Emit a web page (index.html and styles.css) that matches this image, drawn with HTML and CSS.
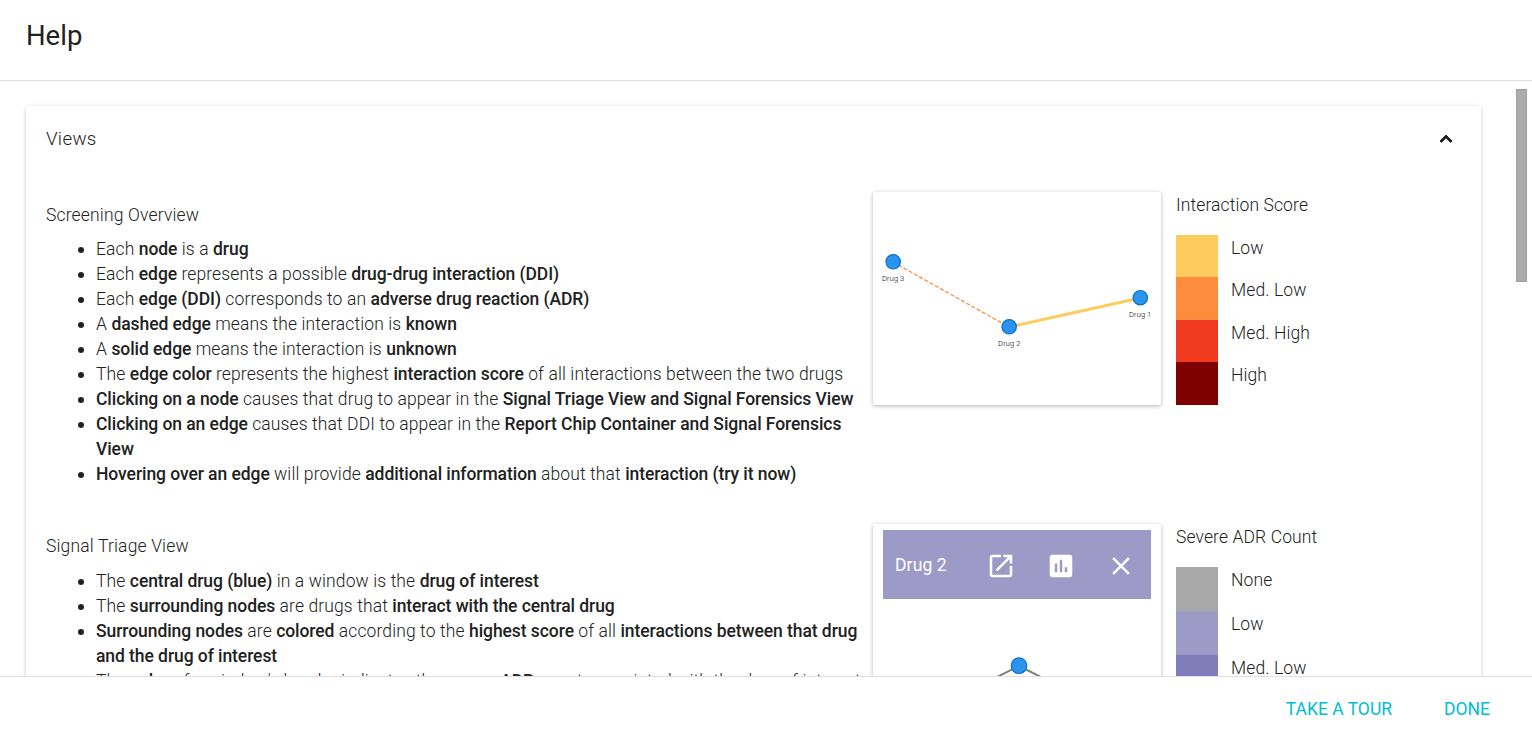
FILE: index.html
```html
<!DOCTYPE html>
<html lang="en">
<head>
<meta charset="utf-8">
<title>Help</title>
<link rel="stylesheet" href="styles.css">
</head>
<body>
<div class="dialog">
  <header class="dialog-title"><h1>Help</h1></header>
  <main class="dialog-content">
    <div class="panel">
      <div class="panel-summary">
        <h2>Views</h2>
        <svg class="chevron" viewBox="0 0 24 24"><path d="M12 8l-6 6 1.41 1.41L12 10.83l4.59 4.58L18 14z"/></svg>
      </div>
      <section class="view">
        <div class="description">
          <h3>Screening Overview</h3>
          <ul>
            <li>Each <b>node</b> is a <b>drug</b></li>
            <li>Each <b>edge</b> represents a possible <b>drug-drug interaction (DDI)</b></li>
            <li>Each <b>edge (DDI)</b> corresponds to an <b>adverse drug reaction (ADR)</b></li>
            <li>A <b>dashed edge</b> means the interaction is <b>known</b></li>
            <li>A <b>solid edge</b> means the interaction is <b>unknown</b></li>
            <li>The <b>edge color</b> represents the highest <b>interaction score</b> of all interactions between the two drugs</li>
            <li><b>Clicking on a node</b> causes that drug to appear in the <b>Signal Triage View and Signal Forensics View</b></li>
            <li><b>Clicking on an edge</b> causes that DDI to appear in the <b>Report Chip Container and Signal Forensics<br>View</b></li>
            <li><b>Hovering over an edge</b> will provide <b>additional information</b> about that <b>interaction (try it now)</b></li>
          </ul>
        </div>
        <div class="figure">
          <svg class="graph" viewBox="0 0 288 213">
            <line class="edge-known" x1="20" y1="70" x2="136" y2="135"/>
            <line class="edge-unknown" x1="136" y1="135" x2="267" y2="106"/>
            <circle class="node" cx="20.2" cy="69.8" r="7.2"/>
            <circle class="node" cx="136.2" cy="134.8" r="7.2"/>
            <circle class="node" cx="267.3" cy="105.7" r="7.2"/>
            <text class="node-label" x="20.2" y="89">Drug 3</text>
            <text class="node-label" x="136.3" y="154">Drug 2</text>
            <text class="node-label" x="267.2" y="125">Drug 1</text>
          </svg>
        </div>
        <div class="legend">
          <h4>Interaction Score</h4>
          <div class="scale score">
            <span class="swatch low"></span><span class="level">Low</span>
            <span class="swatch med-low"></span><span class="level">Med. Low</span>
            <span class="swatch med-high"></span><span class="level">Med. High</span>
            <span class="swatch high"></span><span class="level">High</span>
          </div>
        </div>
      </section>
      <section class="view triage">
        <div class="description">
          <h3>Signal Triage View</h3>
          <ul>
            <li>The <b>central drug (blue)</b> in a window is the <b>drug of interest</b></li>
            <li>The <b>surrounding nodes</b> are drugs that <b>interact with the central drug</b></li>
            <li><b>Surrounding nodes</b> are <b>colored</b> according to the <b>highest score</b> of all <b>interactions between that drug<br>and the drug of interest</b></li>
            <li>The <b>color</b> of a window's header indicates the <b>severe ADR</b> count associated with the drug of interest</li>
          </ul>
        </div>
        <div class="figure window">
          <div class="window-bar">
            <span class="window-name">Drug 2</span>
            <svg class="icon" viewBox="0 0 24 24"><path d="M19 19H5V5h7V3H5c-1.11 0-2 .9-2 2v14c0 1.1.89 2 2 2h14c1.1 0 2-.9 2-2v-7h-2v7zM14 3v2h3.59l-9.83 9.83 1.41 1.41L19 6.41V10h2V3h-7z"/></svg>
            <svg class="icon" viewBox="0 0 24 24"><path d="M19 3H5c-1.1 0-2 .9-2 2v14c0 1.1.9 2 2 2h14c1.1 0 2-.9 2-2V5c0-1.1-.9-2-2-2zM9 17H7v-7h2v7zm4 0h-2V7h2v10zm4 0h-2v-4h2v4z"/></svg>
            <svg class="icon close" viewBox="0 0 24 24"><path d="M19 6.41L17.59 5 12 10.59 6.41 5 5 6.41 10.59 12 5 17.59 6.41 19 12 13.41 17.59 19 19 17.59 13.41 12z"/></svg>
          </div>
          <svg class="triage-graph" viewBox="0 0 268 140">
            <path class="link" d="M136 67L70 100M136 67l66 33"/>
            <circle class="node" cx="136" cy="66.7" r="7.8"/>
          </svg>
        </div>
        <div class="legend">
          <h4>Severe ADR Count</h4>
          <div class="scale count">
            <span class="swatch none"></span><span class="level">None</span>
            <span class="swatch count-low"></span><span class="level">Low</span>
            <span class="swatch count-med-low"></span><span class="level">Med. Low</span>
          </div>
        </div>
      </section>
    </div>
    <div class="scrollbar"></div>
  </main>
  <footer class="dialog-actions">
    <button>Take a tour</button>
    <button>Done</button>
  </footer>
</div>
</body>
</html>
```
FILE: styles.css
```css
* { box-sizing: border-box; }
body {
  margin: 0;
  font: 300 17.5px/25px Roboto, sans-serif;
  letter-spacing: 0.11px;
  color: #212121;
  background: #fff;
}
h1, h2, h3, h4, ul { margin: 0; padding: 0; font-weight: 300; font-size: inherit; }
h3 { letter-spacing: 0.16px; }
b { font-weight: 500; letter-spacing: -0.07px; }
.dialog { display: flex; flex-direction: column; height: 735px; overflow: hidden; }
.dialog-title { flex: none; height: 81px; padding: 20px 26px; border-bottom: 1px solid #e0e0e0; }
.dialog-title h1 { font-size: 27.5px; line-height: 32px; font-weight: 400; letter-spacing: 0; }
.dialog-content {
  display: flex;
  flex: 1;
  min-height: 0;
  justify-content: space-between;
  align-items: flex-start;
  overflow: hidden;
  padding: 0 5px 0 26px;
}
.panel {
  width: 1455px;
  height: 900px;
  margin-top: 25px;
  padding: 0 20px;
  border-radius: 3px;
  box-shadow: 0 1px 4px rgba(0, 0, 0, 0.22);
}
.panel-summary { display: flex; justify-content: space-between; padding: 21px 3px 0 0; height: 86px; }
.panel-summary h2 { font-size: 18.75px; letter-spacing: 0.3px; }
.chevron { width: 24px; height: 24px; fill: #212121; stroke: #212121; stroke-width: 1; stroke-linejoin: round; }
.scrollbar { width: 11px; height: 193px; margin-top: 8px; background: #acacac; border: 1px solid #a0a0a0; }
.view { display: flex; align-items: flex-start; height: 332px; }
.description { width: 827px; padding-top: 11px; white-space: nowrap; }
.description ul { margin-top: 9px; padding-left: 50px; list-style: none; }
.description li::before {
  content: "";
  display: inline-block;
  width: 6px;
  height: 6px;
  margin: 0 12px 0 -18px;
  border-radius: 50%;
  background: #212121;
  vertical-align: 2px;
}
.triage .description { padding-top: 10px; }
.triage .description ul { margin-top: 10px; }
.figure {
  width: 288px;
  height: 213px;
  border-radius: 2px;
  background: #fff;
  box-shadow: 0 1px 4px rgba(0, 0, 0, 0.3);
}
.graph, .triage-graph { display: block; }
.edge-known { stroke: #fd8d3c; stroke-width: 1.3; stroke-dasharray: 4 2; }
.edge-unknown { stroke: #fecc5c; stroke-width: 3; }
.node { fill: #2b94ee; stroke: #0b70c8; stroke-width: 1.2; }
.node-label { font-size: 7.5px; font-weight: 300; text-anchor: middle; fill: #000; }
.link { stroke: #808080; stroke-width: 2; fill: none; }
.legend { margin-left: 15px; }
.legend h4 { height: 43px; padding-top: 1px; }
.scale { display: grid; grid-template-columns: 42px auto; column-gap: 13px; }
.level { padding-top: 1px; }
.score { grid-template-rows: 42px 43px 42px 43px; }
.count { grid-auto-rows: 44px; }
.low { background: #fecc5c; }
.med-low { background: #fd8d3c; }
.med-high { background: #f03b20; }
.high { background: #800000; }
.none { background: #a9a9a9; }
.count-low { background: #9e9ac8; }
.count-med-low { background: #807dba; }
.window { height: 330px; padding: 6px 10px; }
.window-bar { display: flex; align-items: center; height: 69px; padding: 2px 0 0 12px; background: #9e9ac8; color: #fff; font-weight: 400; }
.window-name { width: 91px; }
.icon { width: 30px; height: 30px; margin-right: 30px; fill: #fff; }
.close { margin-right: 0; }
.dialog-actions {
  display: flex;
  flex: none;
  justify-content: flex-end;
  gap: 52px;
  height: 59px;
  padding: 0 42px 0 0;
  border-top: 1px solid #e0e0e0;
  background: #fff;
}
.dialog-actions button {
  padding: 0;
  height: 64px;
  border: 0;
  background: none;
  color: #00bcd4;
  font: 400 17.5px/64px Roboto, sans-serif;
  text-transform: uppercase;
}
```
